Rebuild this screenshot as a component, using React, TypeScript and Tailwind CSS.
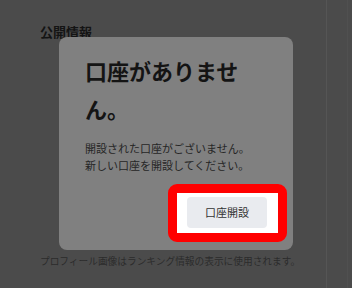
import React from "react";

export default function App() {
  const font = { fontFamily: '"Noto Sans CJK JP", "Noto Sans", sans-serif' };
  return (
    <div
      className="relative w-[352px] h-[288px] overflow-hidden bg-[#4b4b4b] flex"
      style={font}
    >
      <div className="flex-1 flex flex-col pl-10 pt-[22px] pb-[20px]">
        <div className="text-[13px] font-bold leading-[20px] text-[#141414]">公開情報</div>
        <div className="flex-1" />
        <div className="text-[9.7px] leading-[14px] text-[#2c2c2c] whitespace-nowrap">
          プロフィール画像はランキング情報の表示に使用されます。
        </div>
      </div>
      <div className="w-[26px] border-l border-[#555555] flex">
        <div className="w-[20px]" />
        <div className="flex-1 border-l border-[#505050]" />
      </div>

      <div className="absolute left-[59px] top-[37px] w-[234px] h-[213px] rounded-lg bg-[#808080] flex flex-col px-[26px] pt-[14px] pb-[22px]">
        <div className="text-[22px] font-bold leading-[38px] text-[#141414]">口座がありません。</div>
        <div className="mt-[13px] text-[11px] leading-[17px] text-[#262626]">
          開設された口座がございません。
          <br />
          新しい口座を開設してください。
        </div>
        <div className="flex-1" />
        <div className="flex justify-end">
          <div className="relative">
            <div className="absolute left-[-19px] right-[-20px] top-[-13px] bottom-[-14px] rounded-[9px] border-[9px] border-[#ff0000] bg-white" />
            <button className="relative w-[80px] h-[31px] rounded bg-[#e9ebef] text-[11px] text-[#333333]">
              口座開設
            </button>
          </div>
        </div>
      </div>
    </div>
  );
}
